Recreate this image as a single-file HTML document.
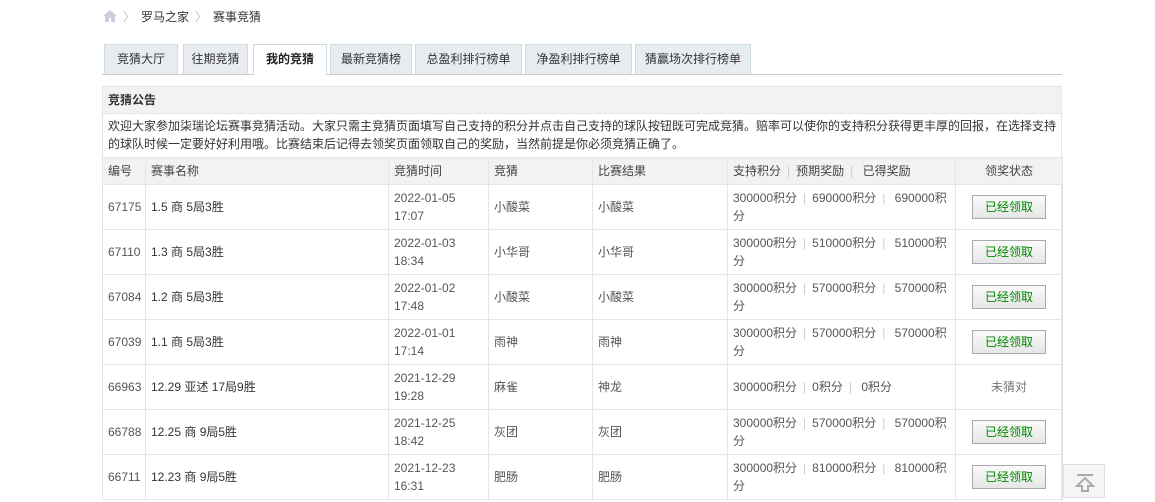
<!DOCTYPE html>
<html><head><meta charset="utf-8"><style>
*{margin:0;padding:0;box-sizing:border-box}
body{width:1155px;height:498px;overflow:hidden;background:#fff;font-family:"Liberation Sans","Noto Sans CJK SC",sans-serif;font-size:12px;color:#333;position:relative}
.bc{position:absolute;top:8px;left:103px;height:18px;line-height:18px;color:#333}
.sep{color:#bbb;margin:0 6px}
.tabs{position:absolute;top:44px;left:102px;width:960px;height:31px;border-bottom:1px solid #ccc}
.tab{position:absolute;top:0;height:30px;line-height:29px;text-align:center;background:#e8ecf0;border:1px solid #cdd;border-bottom:none;color:#333;font-size:12px}
.tab.on{background:#fff;height:31px;font-weight:bold;color:#222}
.box{position:absolute;top:86px;left:102px;width:960px;border:1px solid #e5e5e5;border-bottom:none}
.h{height:27px;line-height:27px;background:#f2f2f2;padding-left:5px;font-weight:bold;font-size:12px;border-bottom:1px solid #e5e5e5}
.n{padding:3px 5px;line-height:18px;height:43px;font-size:12px;color:#333}
table{border-collapse:collapse;width:960px;table-layout:fixed;margin-left:-1px}
td,th{border:1px solid #e5e5e5;padding:0 5px;line-height:18px;font-weight:normal;text-align:left;vertical-align:middle;color:#555}
th{background:#f2f2f2;height:27px;color:#444}
tr{height:45px}
tr.hd{height:27px}
td.nm{color:#333}
.c{text-align:center}
.b{display:inline-block;width:74px;height:24px;line-height:22px;border:1px solid #aaa;background:linear-gradient(#fafafa,#e6e6e6);color:#080;text-align:center}
.p{color:#ccc;margin:0 6px}
.top{position:absolute;left:1063px;top:464px;width:42px;height:34px;border:1px solid #ddd;background:#f5f5f5;border-radius:2px}
</style></head><body>
<div class="bc"><svg width="14" height="12" viewBox="0 0 14 12" style="vertical-align:-1px"><path d="M7 0L0 6h2v6h4V8h2v4h4V6h2z" fill="#c8d0dc"/></svg><span class="sep">〉</span>罗马之家<span class="sep">〉</span>赛事竞猜</div>
<div class="tabs">
<div class="tab" style="left:2px;width:74px">竞猜大厅</div>
<div class="tab" style="left:81px;width:65px">往期竞猜</div>
<div class="tab on" style="left:151px;width:74px">我的竞猜</div>
<div class="tab" style="left:228px;width:82px">最新竞猜榜</div>
<div class="tab" style="left:313px;width:107px">总盈利排行榜单</div>
<div class="tab" style="left:423px;width:107px">净盈利排行榜单</div>
<div class="tab" style="left:533px;width:116px">猜赢场次排行榜单</div>
</div>
<div class="box">
<div class="h">竞猜公告</div>
<div class="n">欢迎大家参加柒瑞论坛赛事竞猜活动。大家只需主竞猜页面填写自己支持的积分并点击自己支持的球队按钮既可完成竞猜。赔率可以使你的支持积分获得更丰厚的回报，在选择支持的球队时候一定要好好利用哦。比赛结束后记得去领奖页面领取自己的奖励，当然前提是你必须竞猜正确了。</div>
<table>
<colgroup><col style="width:43px"><col style="width:243px"><col style="width:100px"><col style="width:104px"><col style="width:135px"><col style="width:228px"><col style="width:107px"></colgroup>
<tr class="hd"><th>编号</th><th>赛事名称</th><th>竞猜时间</th><th>竞猜</th><th>比赛结果</th><th>支持积分<span class="p">|</span>预期奖励<span class="p">|</span> 已得奖励</th><th class="c">领奖状态</th></tr>
<tr><td>67175</td><td class="nm">1.5 商 5局3胜</td><td>2022-01-05<br>17:07</td><td>小酸菜</td><td>小酸菜</td><td>300000积分<span class="p">|</span>690000积分<span class="p">|</span> 690000积分</td><td class="c"><span class="b">已经领取</span></td></tr>
<tr><td>67110</td><td class="nm">1.3 商 5局3胜</td><td>2022-01-03<br>18:34</td><td>小华哥</td><td>小华哥</td><td>300000积分<span class="p">|</span>510000积分<span class="p">|</span> 510000积分</td><td class="c"><span class="b">已经领取</span></td></tr>
<tr><td>67084</td><td class="nm">1.2 商 5局3胜</td><td>2022-01-02<br>17:48</td><td>小酸菜</td><td>小酸菜</td><td>300000积分<span class="p">|</span>570000积分<span class="p">|</span> 570000积分</td><td class="c"><span class="b">已经领取</span></td></tr>
<tr><td>67039</td><td class="nm">1.1 商 5局3胜</td><td>2022-01-01<br>17:14</td><td>雨神</td><td>雨神</td><td>300000积分<span class="p">|</span>570000积分<span class="p">|</span> 570000积分</td><td class="c"><span class="b">已经领取</span></td></tr>
<tr><td>66963</td><td class="nm">12.29 亚述 17局9胜</td><td>2021-12-29<br>19:28</td><td>麻雀</td><td>神龙</td><td>300000积分<span class="p">|</span>0积分<span class="p">|</span> 0积分</td><td class="c" style="color:#777">未猜对</td></tr>
<tr><td>66788</td><td class="nm">12.25 商 9局5胜</td><td>2021-12-25<br>18:42</td><td>灰团</td><td>灰团</td><td>300000积分<span class="p">|</span>570000积分<span class="p">|</span> 570000积分</td><td class="c"><span class="b">已经领取</span></td></tr>
<tr><td>66711</td><td class="nm">12.23 商 9局5胜</td><td>2021-12-23<br>16:31</td><td>肥肠</td><td>肥肠</td><td>300000积分<span class="p">|</span>810000积分<span class="p">|</span> 810000积分</td><td class="c"><span class="b">已经领取</span></td></tr>
</table></div>
<div class="top"><svg width="42" height="34" viewBox="0 0 42 34"><path d="M13 10h16" stroke="#aaa" stroke-width="2"/><path d="M21 13l-8 8h5v5h6v-5h5z" fill="none" stroke="#aaa" stroke-width="2"/></svg></div>
</body></html>
